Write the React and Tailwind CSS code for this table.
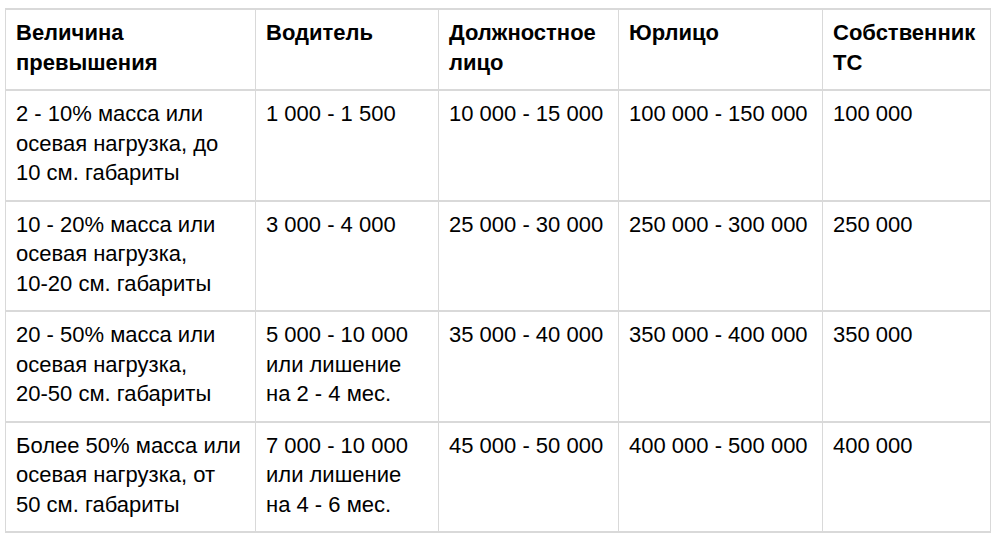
import React from "react";

const headers = [["Величина", "превышения"], ["Водитель"], ["Должностное", "лицо"], ["Юрлицо"], ["Собственник", "ТС"]];

// each cell is a list of lines, wrapped as in the source table
const rows = [
  [["2 - 10% масса или", "осевая нагрузка, до", "10 см. габариты"], ["1 000 - 1 500"], ["10 000 - 15 000"], ["100 000 - 150 000"], ["100 000"]],
  [["10 - 20% масса или", "осевая нагрузка,", "10-20 см. габариты"], ["3 000 - 4 000"], ["25 000 - 30 000"], ["250 000 - 300 000"], ["250 000"]],
  [["20 - 50% масса или", "осевая нагрузка,", "20-50 см. габариты"], ["5 000 - 10 000", "или лишение", "на 2 - 4 мес."], ["35 000 - 40 000"], ["350 000 - 400 000"], ["350 000"]],
  [["Более 50% масса или", "осевая нагрузка, от", "50 см. габариты"], ["7 000 - 10 000", "или лишение", "на 4 - 6 мес."], ["45 000 - 50 000"], ["400 000 - 500 000"], ["400 000"]],
];

const cell = "border-x border-y-2 border-[#d9d9d9] align-top pl-[10px] pr-[6px] pt-[8px] pb-[12px]";

const Lines = ({ lines }) =>
  lines.map((l, k) => (
    <span key={k} className="block whitespace-nowrap">
      {l}
    </span>
  ));

export default function App() {
  return (
    <div className="bg-white min-h-screen pl-[5px] pt-[8px] font-['Liberation_Sans',Arial,sans-serif] text-black text-[22px] leading-[29.5px]">
      <table className="table-fixed border-collapse w-[985px]">
        <colgroup>
          <col className="w-[250px]" />
          <col className="w-[183px]" />
          <col className="w-[180px]" />
          <col className="w-[204px]" />
          <col className="w-[168px]" />
        </colgroup>
        <thead>
          <tr>
            {headers.map((h, i) => (
              <th key={i} className={`${cell} text-left font-bold`}>
                <Lines lines={h} />
              </th>
            ))}
          </tr>
        </thead>
        <tbody>
          {rows.map((r, i) => (
            <tr key={i}>
              {r.map((c, j) => (
                <td key={j} className={cell}>
                  <Lines lines={c} />
                </td>
              ))}
            </tr>
          ))}
        </tbody>
      </table>
    </div>
  );
}
